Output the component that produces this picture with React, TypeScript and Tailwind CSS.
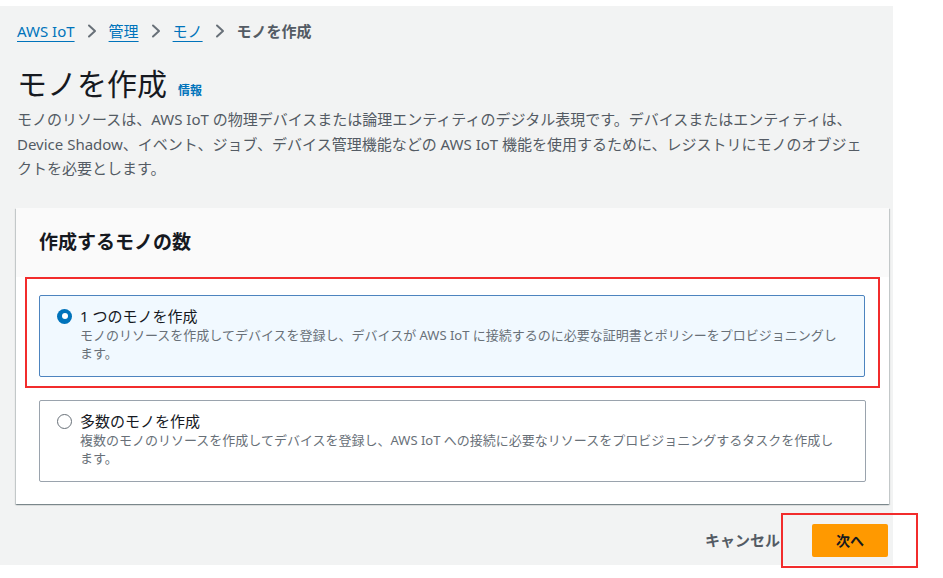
import React from "react";

const FONT = { fontFamily: '"Noto Sans", "Noto Sans CJK JP", sans-serif' };

function Chevron() {
  return (
    <svg width="10" height="14" viewBox="0 0 10 14" className="mx-[12px] shrink-0">
      <path d="M2 1.5 L8 7 L2 12.5" fill="none" stroke="#687078" strokeWidth="2" strokeLinecap="round" strokeLinejoin="round" />
    </svg>
  );
}

function Radio({ checked }: { checked: boolean }) {
  return checked ? (
    <span className="mt-[3px] flex h-[15px] w-[15px] shrink-0 items-center justify-center rounded-full bg-[#0073bb]">
      <span className="h-[6px] w-[6px] rounded-full bg-white" />
    </span>
  ) : (
    <span className="mt-[3px] h-[15px] w-[15px] shrink-0 rounded-full border-[1.5px] border-[#687078] bg-white" />
  );
}

function Option({ checked, title, desc }: { checked: boolean; title: string; desc: string }) {
  return (
    <div
      className={
        "flex gap-[8px] rounded-[2px] border pl-[17px] pr-[20px] pt-[10px] pb-[14px] " +
        (checked ? "border-[#4d84bf] bg-[#f1f9ff]" : "border-[#9aa3ad] bg-white")
      }
    >
      <Radio checked={checked} />
      <div className="min-w-0">
        <div className="text-[15px] leading-[20px] text-[#16191f]">{title}</div>
        <div className="text-[13px] leading-[18px] text-[#687078]">{desc}</div>
      </div>
    </div>
  );
}

export default function App() {
  return (
    <div className="h-[578px] w-[943px] overflow-hidden bg-white" style={FONT}>
      <div className="mt-[6px] flex h-[559px] w-[893px] flex-col bg-[#f2f3f3] pl-[17px] pr-[4px]">
        {/* breadcrumb */}
        <nav className="mt-[14px] flex items-center text-[15px] leading-[22px]">
          <a className="text-[#0073bb] underline decoration-[#0073bb] underline-offset-[4px]">AWS IoT</a>
          <Chevron />
          <a className="text-[#0073bb] underline decoration-[#0073bb] underline-offset-[4px]">管理</a>
          <Chevron />
          <a className="text-[#0073bb] underline decoration-[#0073bb] underline-offset-[4px]">モノ</a>
          <Chevron />
          <span className="font-bold text-[#545b64]">モノを作成</span>
        </nav>

        {/* title */}
        <div className="mt-[24px] flex items-baseline gap-[11px]">
          <h1 className="text-[30px] leading-[36px] font-normal text-[#16191f]">モノを作成</h1>
          <span className="text-[12px] font-bold text-[#0073bb]">情報</span>
        </div>
        <p className="mt-[5px] pr-[25px] text-[15px] leading-[24.5px] text-[#545b64]">
          モノのリソースは、AWS IoT の物理デバイスまたは論理エンティティのデジタル表現です。デバイスまたはエンティティは、Device Shadow、イベント、ジョブ、デバイス管理機能などの AWS IoT 機能を使用するために、レジストリにモノのオブジェクトを必要とします。
        </p>

        {/* card */}
        <section className="mt-[27px] ml-[-1px] bg-white shadow-[0_1px_1px_0_rgba(0,28,36,0.3),1px_1px_1px_0_rgba(0,28,36,0.15),-1px_1px_1px_0_rgba(0,28,36,0.15)]">
          <div className="flex h-[69px] items-center bg-[#fafafa] px-[23px]">
            <h2 className="text-[19px] font-bold text-[#16191f]">作成するモノの数</h2>
          </div>
          <div className="px-[9px] pb-[22px]">
            <div className="border-2 border-[#f22c2c] pl-[12px] pr-[13px] pt-[16px] pb-[9px]">
              <Option
                checked
                title="1 つのモノを作成"
                desc="モノのリソースを作成してデバイスを登録し、デバイスが AWS IoT に接続するのに必要な証明書とポリシーをプロビジョニングします。"
              />
            </div>
            <div className="mx-[14px] mt-[12px]">
              <Option
                checked={false}
                title="多数のモノを作成"
                desc="複数のモノのリソースを作成してデバイスを登録し、AWS IoT への接続に必要なリソースをプロビジョニングするタスクを作成します。"
              />
            </div>
          </div>
        </section>

        {/* footer */}
        <div className="mt-[20px] flex items-center justify-end gap-[32px] pr-[1px]">
          <button className="text-[15px] font-bold text-[#545b64]">キャンセル</button>
          <div className="relative">
            <button className="h-[33px] w-[76px] rounded-[2px] bg-[#ff9900] text-[14px] font-bold text-[#16191f]">
              次へ
            </button>
            <div className="pointer-events-none absolute left-[-31px] top-[-11px] h-[55px] w-[137px] border-2 border-[#f22c2c]" />
          </div>
        </div>
      </div>
    </div>
  );
}
